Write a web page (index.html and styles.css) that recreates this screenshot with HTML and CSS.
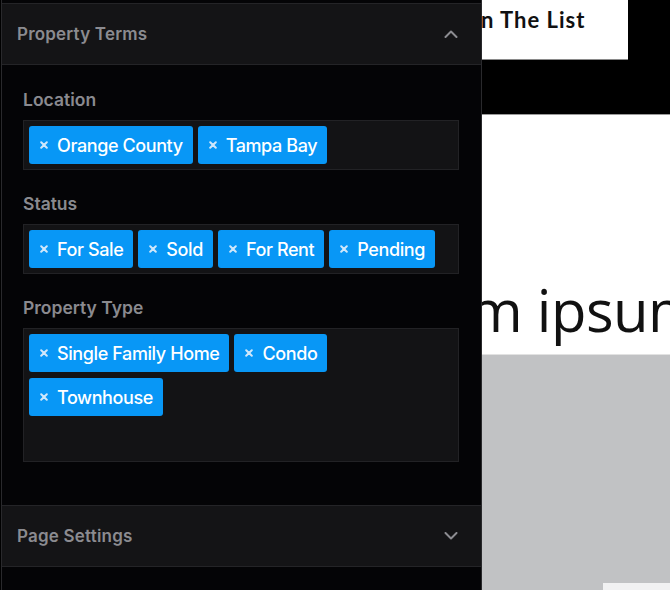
FILE: index.html
```html
<!DOCTYPE html>
<html lang="en">
<head>
<meta charset="utf-8">
<title>Property Terms</title>
<link rel="stylesheet" href="styles.css">
</head>
<body>
<div class="app">
  <aside class="sidebar">
    <section class="panel">
      <header class="panel-header">
        <span class="panel-title">Property Terms</span>
        <svg class="chevron" width="14" height="8" viewBox="0 0 14 8"><polyline points="1.5,7 7,1.5 12.5,7" fill="none" stroke="#8c8c91" stroke-width="2" stroke-linecap="round" stroke-linejoin="round"/></svg>
      </header>
      <div class="panel-body">
        <div class="field">
          <div class="field-label">Location</div>
          <div class="tag-box">
            <span class="tag"><svg class="tag-x" width="8" height="8" viewBox="0 0 8 8"><path d="M1.2 1.2L6.8 6.8M6.8 1.2L1.2 6.8"/></svg>Orange County</span>
            <span class="tag"><svg class="tag-x" width="8" height="8" viewBox="0 0 8 8"><path d="M1.2 1.2L6.8 6.8M6.8 1.2L1.2 6.8"/></svg>Tampa Bay</span>
          </div>
        </div>
        <div class="field">
          <div class="field-label">Status</div>
          <div class="tag-box">
            <span class="tag"><svg class="tag-x" width="8" height="8" viewBox="0 0 8 8"><path d="M1.2 1.2L6.8 6.8M6.8 1.2L1.2 6.8"/></svg>For Sale</span>
            <span class="tag"><svg class="tag-x" width="8" height="8" viewBox="0 0 8 8"><path d="M1.2 1.2L6.8 6.8M6.8 1.2L1.2 6.8"/></svg>Sold</span>
            <span class="tag"><svg class="tag-x" width="8" height="8" viewBox="0 0 8 8"><path d="M1.2 1.2L6.8 6.8M6.8 1.2L1.2 6.8"/></svg>For Rent</span>
            <span class="tag"><svg class="tag-x" width="8" height="8" viewBox="0 0 8 8"><path d="M1.2 1.2L6.8 6.8M6.8 1.2L1.2 6.8"/></svg>Pending</span>
          </div>
        </div>
        <div class="field">
          <div class="field-label">Property Type</div>
          <div class="tag-box tag-box-tall">
            <span class="tag"><svg class="tag-x" width="8" height="8" viewBox="0 0 8 8"><path d="M1.2 1.2L6.8 6.8M6.8 1.2L1.2 6.8"/></svg>Single Family Home</span>
            <span class="tag"><svg class="tag-x" width="8" height="8" viewBox="0 0 8 8"><path d="M1.2 1.2L6.8 6.8M6.8 1.2L1.2 6.8"/></svg>Condo</span>
            <span class="tag"><svg class="tag-x" width="8" height="8" viewBox="0 0 8 8"><path d="M1.2 1.2L6.8 6.8M6.8 1.2L1.2 6.8"/></svg>Townhouse</span>
          </div>
        </div>
      </div>
    </section>
    <section class="panel">
      <header class="panel-header">
        <span class="panel-title">Page Settings</span>
        <svg class="chevron chevron-down" width="14" height="8" viewBox="0 0 14 8"><polyline points="1.5,1 7,6.5 12.5,1" fill="none" stroke="#8c8c91" stroke-width="2" stroke-linecap="round" stroke-linejoin="round"/></svg>
      </header>
    </section>
  </aside>
  <main class="preview">
    <div class="topbar">
      <div class="signup">n The List</div>
    </div>
    <div class="hero">
      <h1 class="hero-title">m ipsum dolor</h1>
    </div>
    <div class="gray-area">
      <div class="corner-box"></div>
    </div>
  </main>
</div>
</body>
</html>
```

FILE: styles.css
```css
* { box-sizing: border-box; }

html, body {
  margin: 0;
  padding: 0;
  background: #000;
  height: 590px;
  overflow: hidden;
}

.app {
  display: flex;
  height: 590px;
  width: 670px;
}

.sidebar {
  width: 481px;
  margin-left: 1px;
  flex: none;
  height: 590px;
  background: #040406;
  border-left: 1px solid #29292c;
  border-right: 1px solid #29292c;
  padding-top: 3px;
  font-family: Inter, "Noto Sans", sans-serif;
}

.panel-header {
  display: flex;
  align-items: center;
  justify-content: space-between;
  height: 62px;
  background: #141416;
  border-top: 1px solid #242427;
  border-bottom: 1px solid #242427;
  padding: 0 23px 0 15px;
}

.panel-title {
  font-size: 17px;
  font-weight: 600;
  color: #8b8b90;
  letter-spacing: 0.2px;
}

.chevron { display: block; }

.panel-body {
  padding: 24px 22px 43px 21px;
  display: flex;
  flex-direction: column;
  gap: 23px;
}

.field-label {
  font-size: 17.5px;
  line-height: 22px;
  font-weight: 600;
  color: #8a8a8f;
  margin-bottom: 9px;
}

.tag-box {
  display: flex;
  flex-wrap: wrap;
  align-content: flex-start;
  gap: 6px 5px;
  padding: 5px;
  background: #131315;
  border: 1px solid #222225;
}

.tag-box-tall { min-height: 134px; }

.tag {
  display: inline-flex;
  align-items: center;
  height: 38px;
  padding: 0 10px 0 11px;
  gap: 9px;
  background: #0897f6;
  border-radius: 3px;
  color: #fff;
  font-size: 18px;
  font-weight: 500;
  letter-spacing: -0.4px;
  white-space: nowrap;
}

.tag-x { display: block; }
.tag-x path {
  stroke: #cfe7fb;
  stroke-width: 2;
  stroke-linecap: round;
  fill: none;
}

.preview {
  flex: 1;
  display: flex;
  flex-direction: column;
  overflow: hidden;
  background: #000;
}

.topbar {
  height: 114px;
  flex: none;
}

.signup {
  width: 146px;
  height: 60px;
  background: #fff;
  border-bottom: 1px solid #8a8a8a;
  font-family: Lato, "Open Sans", sans-serif;
  font-weight: 700;
  font-size: 22px;
  letter-spacing: 1px;
  color: #111;
  padding-top: 6px;
  text-indent: -1px;
  white-space: nowrap;
  overflow: hidden;
}

.hero {
  height: 241px;
  flex: none;
  background: #fff;
  border-top: 1px solid #9a9a9a;
  border-bottom: 1px solid #e2e2e2;
  display: flex;
  align-items: flex-end;
  overflow: hidden;
}

.hero-title {
  margin: 0 0 15px -13px;
  font-family: "Open Sans", sans-serif;
  font-weight: 500;
  font-size: 58px;
  line-height: 58px;
  letter-spacing: -0.5px;
  color: #111;
  white-space: nowrap;
}

.gray-area {
  flex: 1;
  background: #c1c2c4;
  display: flex;
  justify-content: flex-end;
  align-items: flex-end;
}

.corner-box {
  width: 67px;
  height: 7px;
  background: #f1f1f2;
}
```
